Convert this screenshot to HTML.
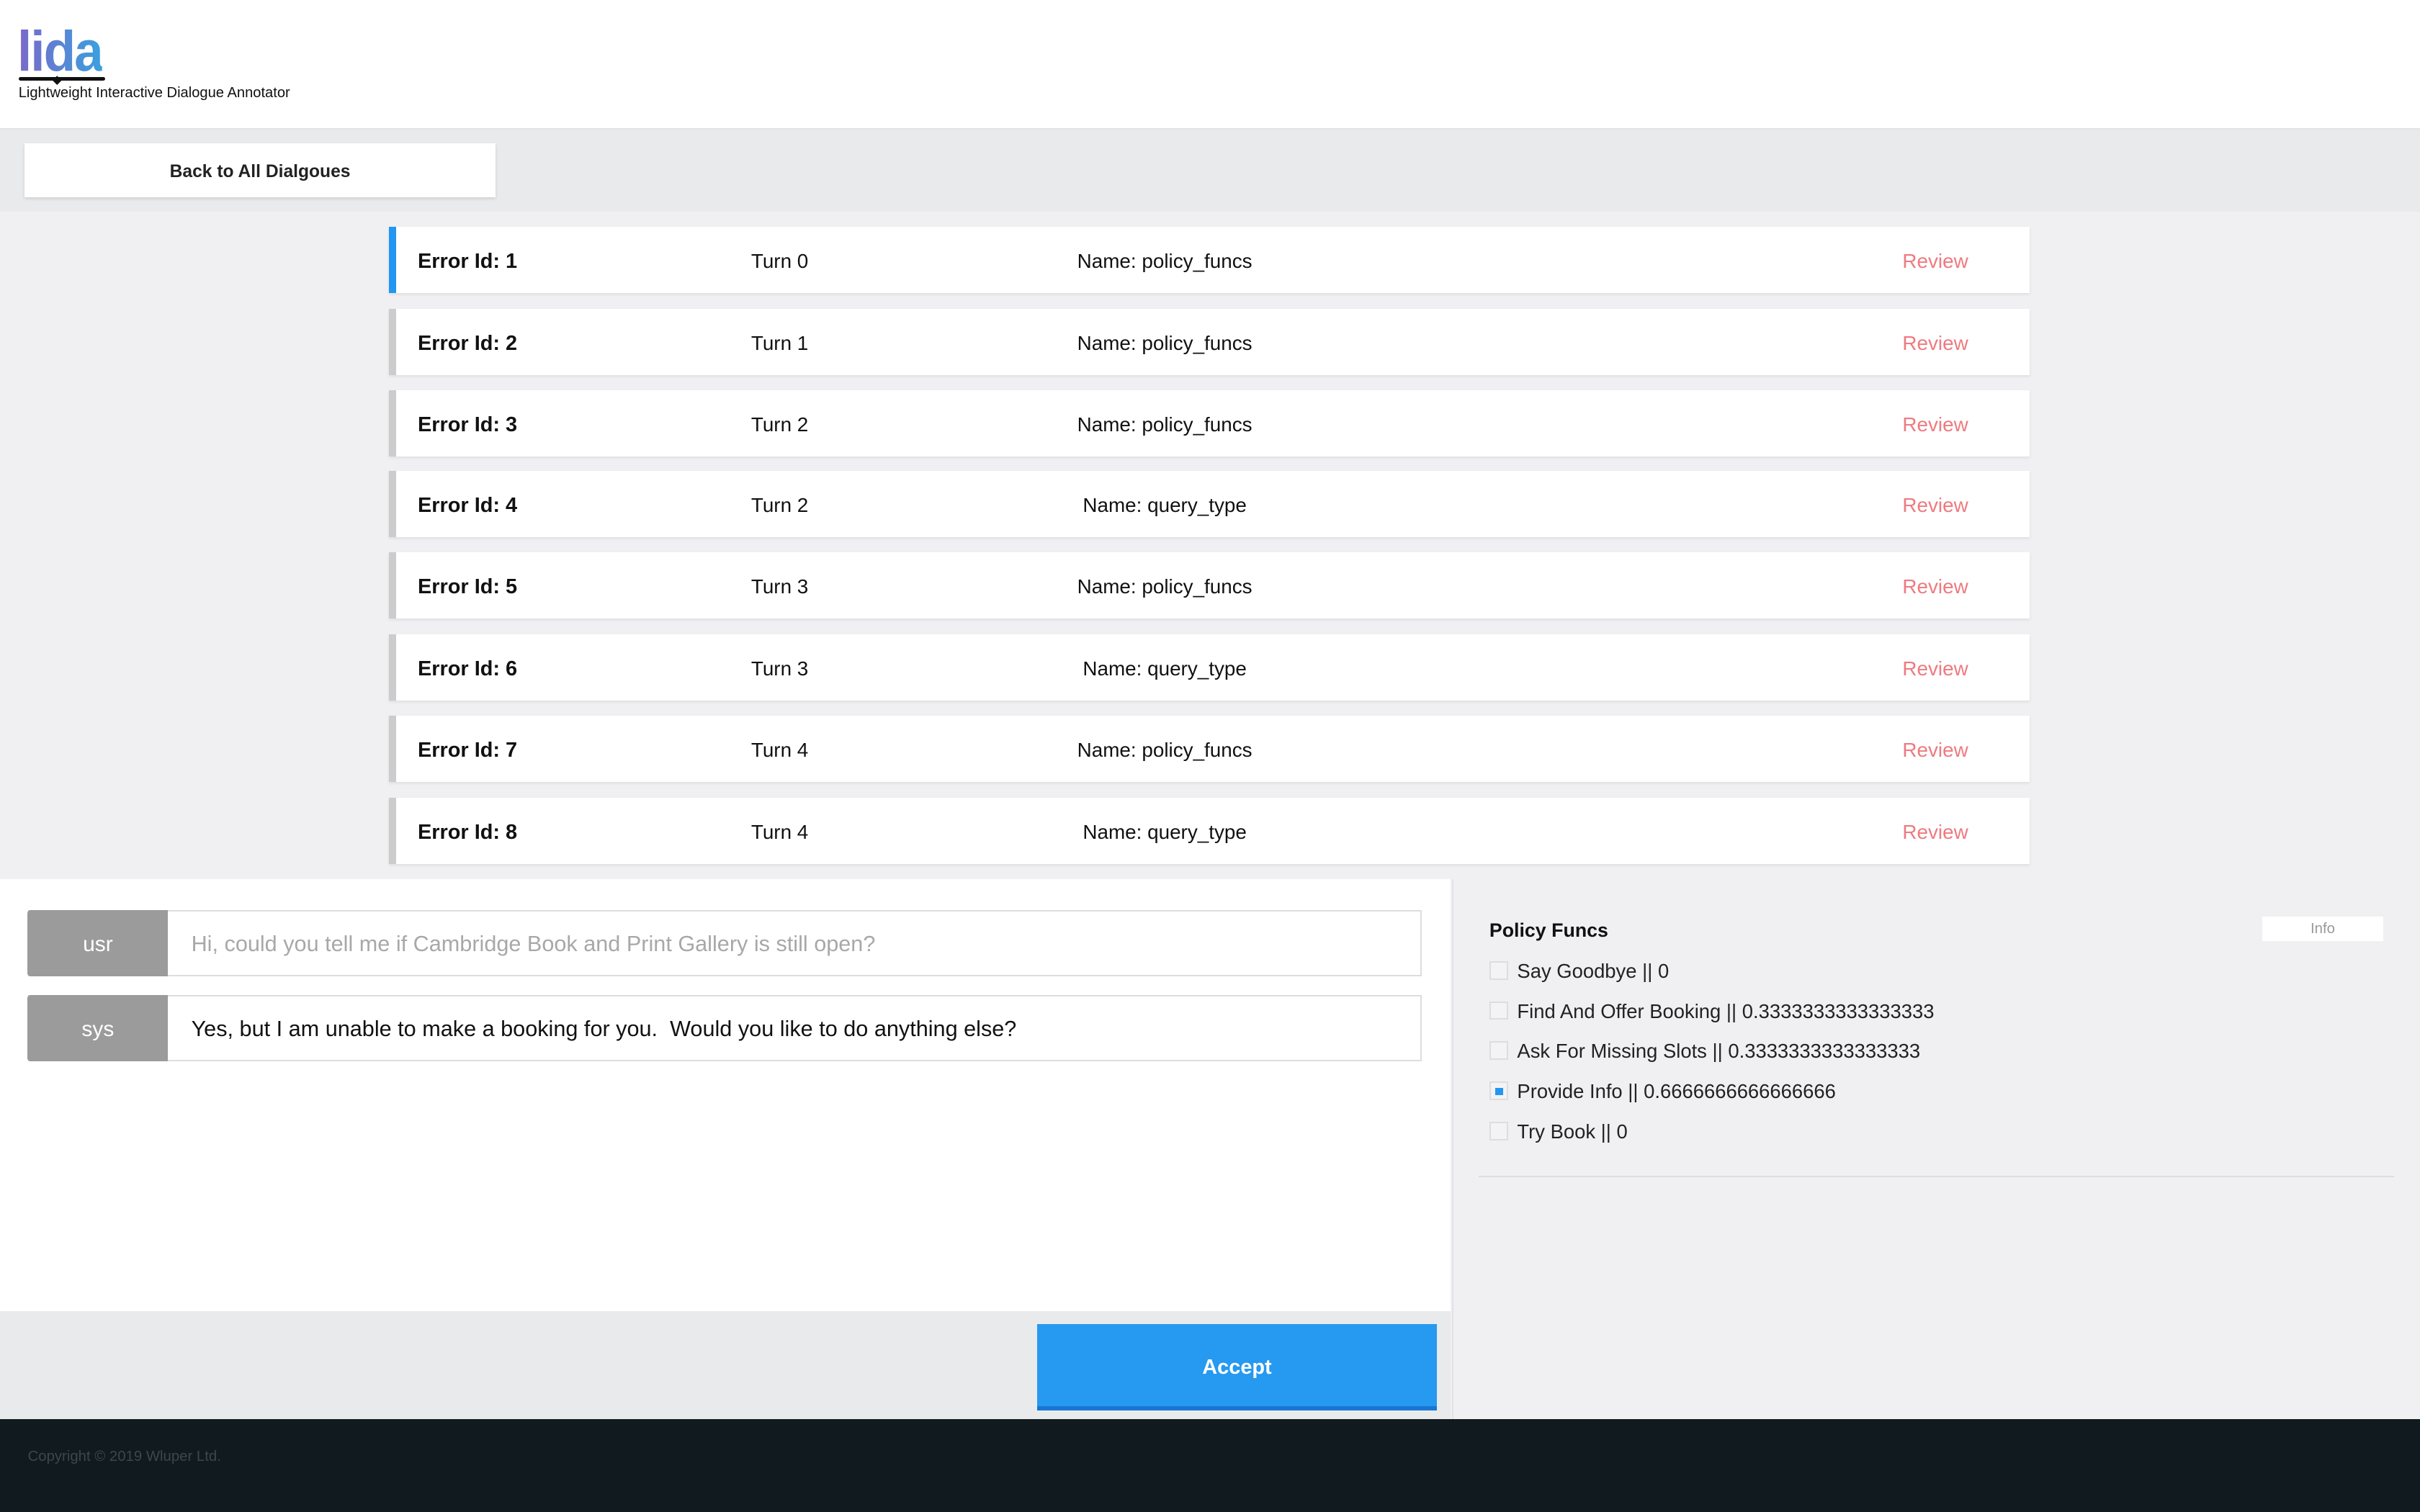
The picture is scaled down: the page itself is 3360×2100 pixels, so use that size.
<!DOCTYPE html>
<html><head><meta charset="utf-8"><style>
html{zoom:2.142857}
body{margin:0;width:1568px;height:980px;position:relative;overflow:hidden;font-family:"Liberation Sans",sans-serif;background:#f0f0f2;color:#111}
.abs{position:absolute}
.hdr{left:0;top:0;width:1568px;height:83px;background:#fff;border-bottom:1px solid #e2e2e4}
.band{left:0;top:84px;width:1568px;height:53px;background:#e9eaec}
.back{left:16px;top:93px;width:305px;height:35px;background:#fff;box-shadow:0 1px 2px rgba(0,0,0,.12);font-weight:bold;font-size:11.5px;text-align:center;line-height:37px;color:#222}
.row{left:252px;width:1063px;height:43px;background:#fff;border-left:5px solid #ccc;box-sizing:border-box;box-shadow:0 1px 2px rgba(0,0,0,.08);font-size:13px}
.row span{position:absolute;top:15px}
.row .id{left:14px;font-weight:bold;font-size:13.5px}
.row .t{left:230px}
.row .n{left:398px;width:200px;text-align:center}
.row .r{left:976px;color:#ee7a80}
.left{left:0;top:570px;width:940px;height:280px;background:#fff}
.lgray{left:0;top:850px;width:940px;height:70px;background:#e9eaec}
.right{left:941px;top:570px;width:627px;height:350px;background:#f0f0f2;border-left:1px solid #e2e2e4}
.msg{left:18px;width:903px;height:43px;border:1px solid #ddd;box-sizing:border-box;background:#fff}
.lab{position:absolute;left:-1px;top:-1px;width:91px;height:43px;background:#9b9b9b;color:#fff;font-size:14px;text-align:center;line-height:45px;border-radius:2px 0 0 2px}
.txt{position:absolute;left:105px;top:1px;line-height:41px;font-size:14.3px}
.accept{left:672px;top:858px;width:259px;height:56px;background:#2699f0;border-bottom:3px solid #1976d2;box-sizing:border-box;color:#fff;font-weight:bold;font-size:13.5px;text-align:center;line-height:56px}
.foot{left:0;top:920px;width:1568px;height:60px;background:#111a1f;color:#3d464c;font-size:9.5px}
.cb{position:absolute;left:965px;width:12px;height:12px;border:1px solid #ddd;background:#f3f3f5;box-sizing:border-box}
.cl{position:absolute;left:983px;font-size:12.8px;color:#222}
</style></head><body>
<div class="abs hdr"></div>
<div class="abs" style="left:11px;top:13px;font-size:37px;font-weight:bold;letter-spacing:-1px;line-height:40px;transform:scaleX(0.92);transform-origin:left;background:linear-gradient(90deg,#7b68c8,#3aa0e0);-webkit-background-clip:text;color:transparent">lida</div>
<div class="abs" style="left:12px;top:50px;width:56px;height:2.5px;background:#111;border-radius:2px"></div>
<div class="abs" style="left:35px;top:50px;width:4px;height:4px;background:#111;transform:rotate(45deg)"></div>
<div class="abs" style="left:12px;top:55px;font-size:9.4px;color:#111">Lightweight Interactive Dialogue Annotator</div>
<div class="abs band"></div>
<div class="abs back">Back to All Dialgoues</div>

<div class="abs row" style="top:147px;border-left-color:#2196f3"><span class="id">Error Id: 1</span><span class="t">Turn 0</span><span class="n">Name: policy_funcs</span><span class="r">Review</span></div>
<div class="abs row" style="top:200px"><span class="id">Error Id: 2</span><span class="t">Turn 1</span><span class="n">Name: policy_funcs</span><span class="r">Review</span></div>
<div class="abs row" style="top:253px"><span class="id">Error Id: 3</span><span class="t">Turn 2</span><span class="n">Name: policy_funcs</span><span class="r">Review</span></div>
<div class="abs row" style="top:305px"><span class="id">Error Id: 4</span><span class="t">Turn 2</span><span class="n">Name: query_type</span><span class="r">Review</span></div>
<div class="abs row" style="top:358px"><span class="id">Error Id: 5</span><span class="t">Turn 3</span><span class="n">Name: policy_funcs</span><span class="r">Review</span></div>
<div class="abs row" style="top:411px"><span class="id">Error Id: 6</span><span class="t">Turn 3</span><span class="n">Name: query_type</span><span class="r">Review</span></div>
<div class="abs row" style="top:464px"><span class="id">Error Id: 7</span><span class="t">Turn 4</span><span class="n">Name: policy_funcs</span><span class="r">Review</span></div>
<div class="abs row" style="top:517px"><span class="id">Error Id: 8</span><span class="t">Turn 4</span><span class="n">Name: query_type</span><span class="r">Review</span></div>

<div class="abs left"></div>
<div class="abs lgray"></div>
<div class="abs msg" style="top:590px"><div class="lab">usr</div><div class="txt" style="color:#a8a8a8">Hi, could you tell me if Cambridge Book and Print Gallery is still open?</div></div>
<div class="abs msg" style="top:645px"><div class="lab">sys</div><div class="txt">Yes, but I am unable to make a booking for you.&nbsp; Would you like to do anything else?</div></div>
<div class="abs accept">Accept</div>

<div class="abs right"></div>
<div class="abs" style="left:965px;top:596px;font-weight:bold;font-size:12.5px">Policy Funcs</div>
<div class="abs" style="left:1466px;top:594px;width:78px;height:16px;background:#fff;color:#999;font-size:9.5px;text-align:center;line-height:16px">Info</div>
<div class="cb" style="top:623px"></div><div class="cl" style="top:622px">Say Goodbye || 0</div>
<div class="cb" style="top:649px"></div><div class="cl" style="top:648px">Find And Offer Booking || 0.3333333333333333</div>
<div class="cb" style="top:675px"></div><div class="cl" style="top:674px">Ask For Missing Slots || 0.3333333333333333</div>
<div class="cb" style="top:701px"><div style="position:absolute;left:3px;top:3px;width:5px;height:5px;background:#2196f3"></div></div><div class="cl" style="top:700px">Provide Info || 0.6666666666666666</div>
<div class="cb" style="top:727px"></div><div class="cl" style="top:726px">Try Book || 0</div>
<div class="abs" style="left:958px;top:762px;width:593px;height:1px;background:#ddd"></div>

<div class="abs foot"><div style="position:absolute;left:18px;top:19px">Copyright © 2019 Wluper Ltd.</div></div>
</body></html>
